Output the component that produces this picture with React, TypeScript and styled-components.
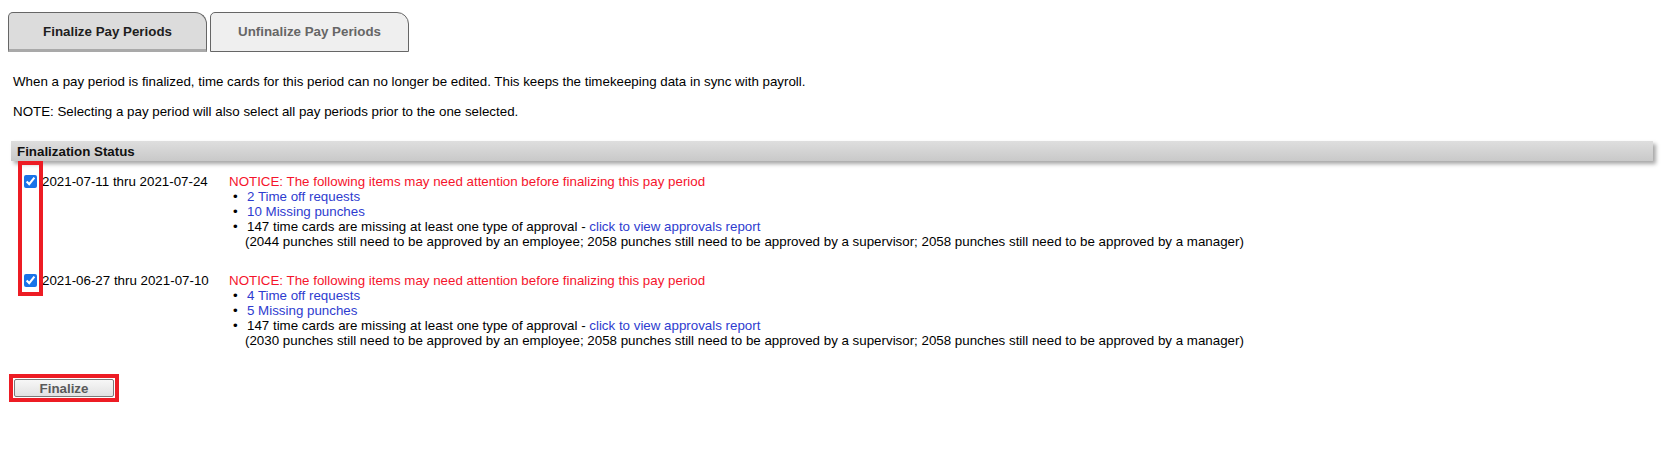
import styled, { createGlobalStyle } from 'styled-components';

const GlobalStyle = createGlobalStyle`
  body {
    margin: 0;
    background: #fff;
    color: #000;
    font-family: "Liberation Sans", Arial, sans-serif;
  }
`;

const Page = styled.div`
  padding: 12px 8px 40px 8px;
`;

const Tabs = styled.div`
  display: flex;
  gap: 3px;
`;

const Tab = styled.div<{ $active?: boolean }>`
  width: 197px;
  height: 36px;
  display: flex;
  align-items: center;
  justify-content: center;
  border: 1px solid #666;
  border-bottom: ${(p) => (p.$active ? '3px solid #a9a9a9' : '1px solid #666')};
  border-radius: 5px 12px 0 0;
  background: ${(p) => (p.$active ? '#dcdcdc' : '#efefef')};
  color: ${(p) => (p.$active ? '#1e1e1e' : '#666')};
  font-size: 10pt;
  font-weight: bold;
  box-sizing: content-box;
  padding-bottom: ${(p) => (p.$active ? '0' : '2px')};
`;

const Intro = styled.p`
  margin: 22px 0 0 5px;
  font-size: 10pt;
  line-height: 15px;
  & + & {
    margin-top: 15px;
  }
`;

const SectionBar = styled.div`
  margin: 22px 10px 0 3px;
  height: 20px;
  display: flex;
  align-items: center;
  padding-left: 6px;
  background: linear-gradient(#dedede, #c9c9c9);
  box-shadow: 3px 3px 4px rgba(0, 0, 0, 0.35);
  font-size: 10pt;
  font-weight: bold;
  color: #111;
`;

const Periods = styled.div`
  position: relative;
  padding-top: 13px;
`;

const Highlight = styled.div<{ $w: number; $h: number; $x: number; $y: number }>`
  position: absolute;
  left: ${(p) => p.$x}px;
  top: ${(p) => p.$y}px;
  width: ${(p) => p.$w}px;
  height: ${(p) => p.$h}px;
  border: 4px solid #ed1c24;
  box-sizing: border-box;
  pointer-events: none;
`;

const PeriodRow = styled.div`
  display: grid;
  grid-template-columns: 205px 1fr;
  padding-left: 16px;
  font-size: 10pt;
  line-height: 15px;
  & + & {
    margin-top: 24px;
  }
`;

const DateCell = styled.label`
  display: flex;
  align-items: center;
  gap: 5px;
  height: 15px;
`;

const Check = styled.input`
  width: 13px;
  height: 13px;
  margin: 0;
  accent-color: #1a73e8;
`;

const Notice = styled.div`
  color: #f5142c;
`;

const Items = styled.ul`
  list-style: none;
  margin: 0;
  padding: 0;
`;

const Item = styled.li`
  display: flex;
  &::before {
    content: '•';
    width: 14px;
    padding-left: 4px;
    flex-shrink: 0;
  }
`;

const Link = styled.a`
  color: #2e3ccf;
  text-decoration: none;
  cursor: pointer;
`;

const Detail = styled.div`
  padding-left: 16px;
`;

const ButtonFrame = styled.div`
  display: inline-block;
  margin: 26px 0 0 1px;
  border: 4px solid #ed1c24;
  padding: 1px;
`;

const Button = styled.button`
  display: block;
  width: 100px;
  height: 18px;
  padding: 0;
  border: 1px solid #7a7a7a;
  border-radius: 2px;
  background: linear-gradient(#f7f7f7, #e2e2e2);
  color: #5a5a5a;
  font-family: "Liberation Sans", Arial, sans-serif;
  font-size: 10pt;
  font-weight: bold;
`;

type Period = {
  range: string;
  timeOff: number;
  missing: number;
  cards: number;
  employee: number;
  supervisor: number;
  manager: number;
};

const periods: Period[] = [
  { range: '2021-07-11 thru 2021-07-24', timeOff: 2, missing: 10, cards: 147, employee: 2044, supervisor: 2058, manager: 2058 },
  { range: '2021-06-27 thru 2021-07-10', timeOff: 4, missing: 5, cards: 147, employee: 2030, supervisor: 2058, manager: 2058 },
];

export default function App() {
  return (
    <Page>
      <GlobalStyle />
      <Tabs>
        <Tab $active>Finalize Pay Periods</Tab>
        <Tab>Unfinalize Pay Periods</Tab>
      </Tabs>
      <Intro>
        When a pay period is finalized, time cards for this period can no longer be edited. This keeps the timekeeping data in sync with payroll.
      </Intro>
      <Intro>NOTE: Selecting a pay period will also select all pay periods prior to the one selected.</Intro>
      <SectionBar>Finalization Status</SectionBar>
      <Periods>
        {periods.map((p) => (
          <PeriodRow key={p.range}>
            <DateCell>
              <Check type="checkbox" defaultChecked />
              {p.range}
            </DateCell>
            <div>
              <Notice>NOTICE: The following items may need attention before finalizing this pay period</Notice>
              <Items>
                <Item>
                  <Link>{p.timeOff} Time off requests</Link>
                </Item>
                <Item>
                  <Link>{p.missing} Missing punches</Link>
                </Item>
                <Item>
                  <span>
                    {p.cards} time cards are missing at least one type of approval - <Link>click to view approvals report</Link>
                  </span>
                </Item>
              </Items>
              <Detail>
                ({p.employee} punches still need to be approved by an employee; {p.supervisor} punches still need to be approved by a supervisor; {p.manager} punches still need to be approved by a manager)
              </Detail>
            </div>
          </PeriodRow>
        ))}
        <Highlight $x={10} $y={0} $w={25} $h={135} />
      </Periods>
      <ButtonFrame>
        <Button>Finalize</Button>
      </ButtonFrame>
    </Page>
  );
}
